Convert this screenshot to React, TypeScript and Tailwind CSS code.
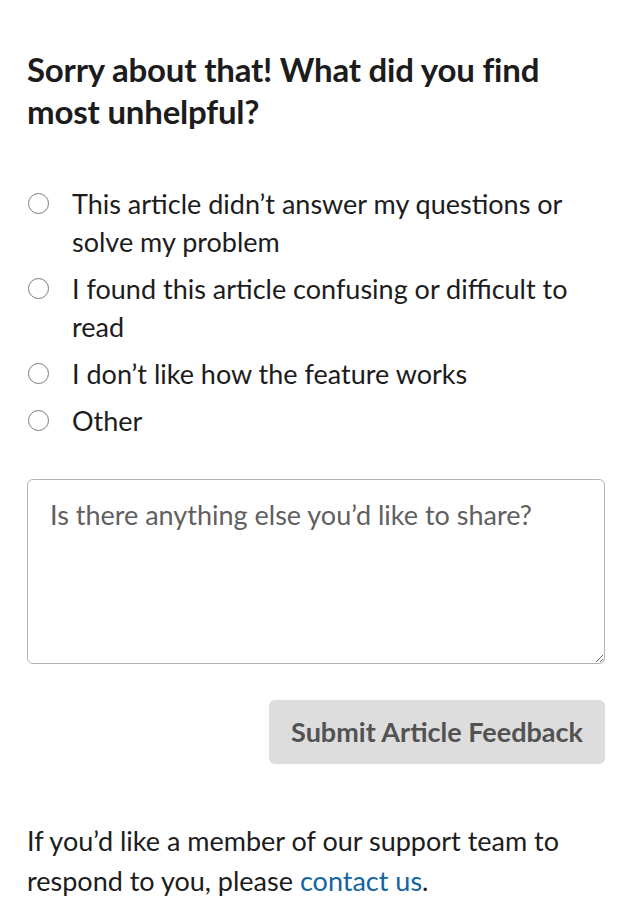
import { useState } from "react";

const options = [
  "This article didn’t answer my questions or solve my problem",
  "I found this article confusing or difficult to read",
  "I don’t like how the feature works",
  "Other",
];

export default function App() {
  const [choice, setChoice] = useState("");
  const [comment, setComment] = useState("");

  return (
    <div className="w-[620px] min-h-[920px] bg-white pl-[27px] pr-[15px] pt-[48px] text-[#1d1c1d] font-['Lato','Liberation_Sans',sans-serif]">
      <h2 className="text-[33px] leading-[42px] font-bold tracking-[-0.2px]">
        Sorry about that! What did you find most unhelpful?
      </h2>

      <div className="mt-[53px] flex flex-col gap-[9px]">
        {options.map((option) => (
          <label key={option} className="flex items-start gap-[23px] cursor-pointer">
            <span className="mt-[8px] ml-px flex-none w-[21px] h-[21px] rounded-full border-[1.5px] border-[#7b7a7b] bg-white flex items-center justify-center">
              {choice === option && <span className="w-[11px] h-[11px] rounded-full bg-[#1264a3]" />}
            </span>
            <input
              type="radio"
              name="feedback"
              className="hidden"
              checked={choice === option}
              onChange={() => setChoice(option)}
            />
            <span className="text-[27px] leading-[38px] pr-[20px]">{option}</span>
          </label>
        ))}
      </div>

      <textarea
        value={comment}
        onChange={(event) => setComment(event.target.value)}
        placeholder="Is there anything else you’d like to share?"
        className="mt-[39px] block w-full h-[185px] border border-[#b3b3b3] rounded-[6px] px-[22px] py-[17px] text-[27px] leading-[36px] placeholder:text-[#616061] outline-none"
      />

      <div className="flex justify-end mt-[36px]">
        <button className="h-[64px] w-[336px] rounded-[6px] bg-[#dddddd] text-[#535253] text-[27px] font-bold">
          Submit Article Feedback
        </button>
      </div>

      <p className="mt-[57px] text-[27px] leading-[40px] pr-[20px]">
        If you’d like a member of our support team to respond to you, please{" "}
        <a href="#" className="text-[#1264a3]">contact us</a>.
      </p>
    </div>
  );
}
